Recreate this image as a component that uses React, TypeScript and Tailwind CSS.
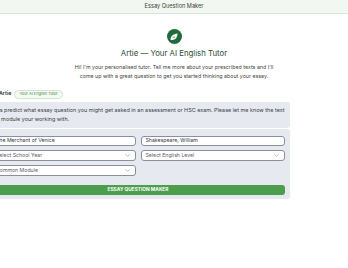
import { ChevronDown } from "lucide-react";

function ArtieLogo() {
  return (
    <div className="w-[15px] h-[15px] rounded-full bg-[#1f6b3c] flex items-center justify-center">
      <svg width="10" height="10" viewBox="0 0 20 20">
        <path d="M3 16 C3 8 8 4 17 3 C17 11 13 16 5 16 Z" fill="#ffffff" />
        <circle cx="8.5" cy="10" r="1.2" fill="#1f6b3c" />
        <circle cx="11.5" cy="10" r="1.2" fill="#1f6b3c" />
      </svg>
    </div>
  );
}

function Field({ value }: { value: string }) {
  return (
    <div className="h-[10px] rounded-[3px] border border-[#8a8f99] bg-white flex items-center px-[4px]">
      <span className="text-[5.2px] leading-none text-[#333842] whitespace-nowrap">{value}</span>
    </div>
  );
}

function SelectBox({ value }: { value: string }) {
  return (
    <div className="h-[11px] rounded-[3px] border border-[#8a8f99] bg-white flex items-center justify-between px-[4px]">
      <span className="text-[5.2px] leading-none text-[#5b606a] whitespace-nowrap">{value}</span>
      <ChevronDown size={7} strokeWidth={1.6} color="#6b7079" />
    </div>
  );
}

export default function App() {
  return (
    <div className="w-[348px] h-[268px] overflow-hidden bg-white font-['Inter',sans-serif]">
      <div className="h-[14px] bg-[#f2f8f1] border-b border-[#d9e6d9] flex items-center justify-center">
        <span className="text-[5.6px] text-[#3a3f3a]">Essay Question Maker</span>
      </div>

      <div className="flex flex-col items-center pt-[15px]">
        <ArtieLogo />
        <div className="mt-[6px] text-[7.8px] leading-none text-[#2d4a35]">Artie — Your AI English Tutor</div>
        <p className="mt-[5px] w-[204px] text-center text-[5.3px] leading-[9px] text-[#444]">
          Hi! I'm your personalised tutor. Tell me more about your prescribed texts and I'll come up with a great question to get you started thinking about your essay.
        </p>
      </div>

      <div className="ml-[-14px] w-[304px] mt-[9px]">
        <div className="flex items-center gap-[3px] pl-[13px]">
          <span className="text-[5.3px] font-semibold text-[#333]">Artie</span>
          <span className="h-[9px] px-[4px] rounded-full border border-[#cfe6cf] bg-[#f5fbf4] flex items-center text-[3.9px] text-[#3d8a45] whitespace-nowrap">
            Your AI English Tutor
          </span>
        </div>

        <div className="mt-[3px] rounded-[3px] bg-[#e6e9f0] px-[4px] py-[4px] text-[5.45px] leading-[9px] text-[#3a3e46]">
          Let's predict what essay question you might get asked in an assessment or HSC exam. Please let me know the text and module your working with.
        </div>

        <div className="mt-[1px] rounded-[3px] bg-[#e6e9f0] px-[5px] pt-[7px] pb-[4px]">
          <div className="grid grid-cols-2 gap-x-[5px] gap-y-[4px]">
            <Field value="The Merchant of Venice" />
            <Field value="Shakespeare, William" />
            <SelectBox value="Select School Year" />
            <SelectBox value="Select English Level" />
            <SelectBox value="Common Module" />
          </div>
          <button className="mt-[9px] w-full h-[10px] rounded-[3px] bg-[#4c9e4c] flex items-center justify-center text-[4.8px] font-bold text-white">
            ESSAY QUESTION MAKER
          </button>
        </div>
      </div>
    </div>
  );
}
